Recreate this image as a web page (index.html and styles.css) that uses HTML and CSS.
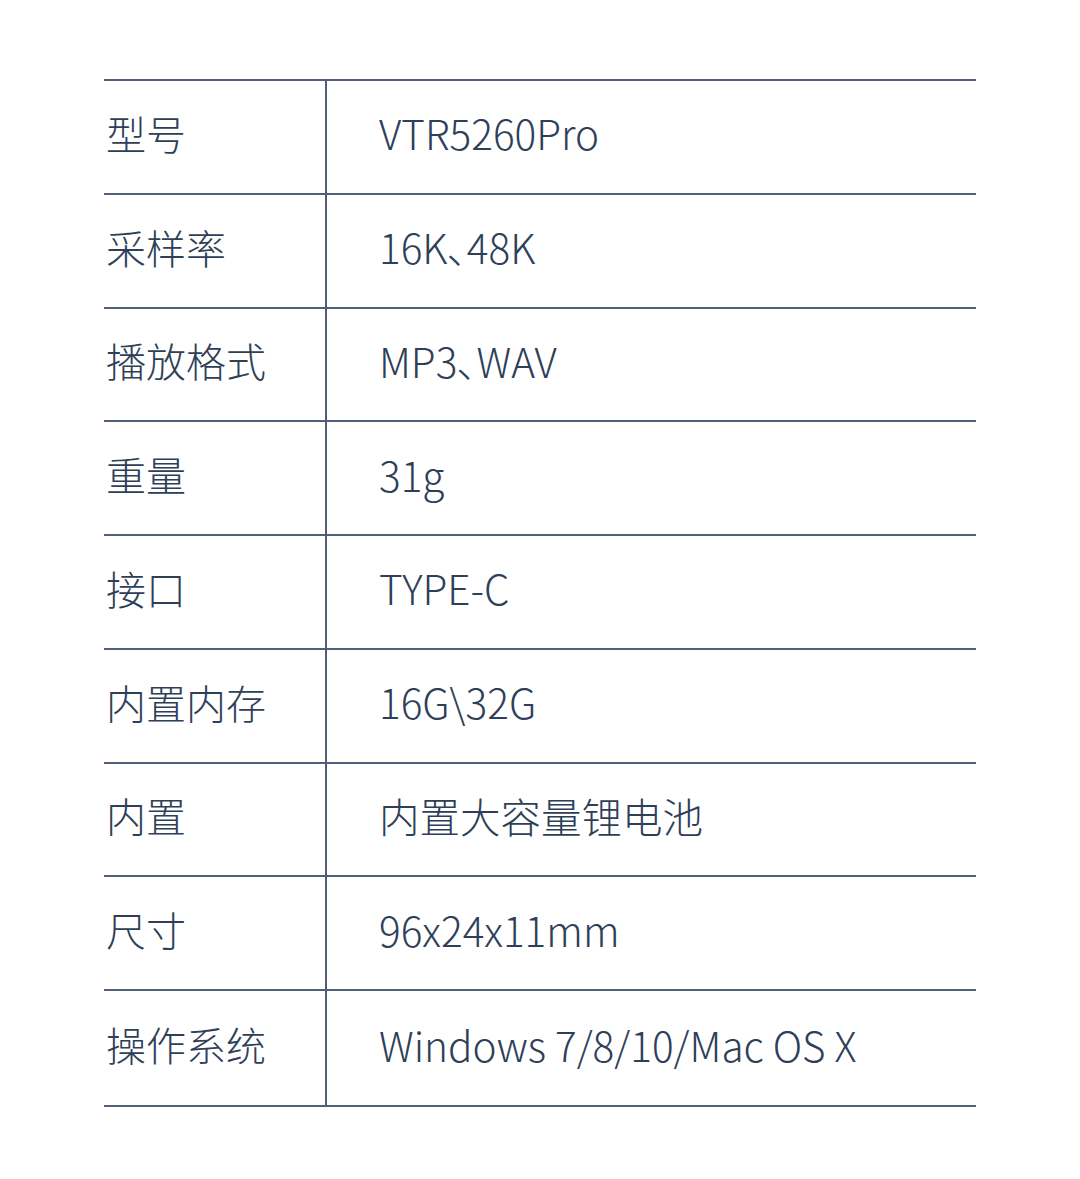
FILE: index.html
```html
<!DOCTYPE html>
<html lang="zh-CN">
<head>
<meta charset="utf-8">
<link rel="stylesheet" href="styles.css">
</head>
<body>
<div class="spec">
  <div class="row"><div class="k">型号</div><div class="v">VTR5260Pro</div></div>
  <div class="row"><div class="k">采样率</div><div class="v">16K<span class="p">、</span>48K</div></div>
  <div class="row"><div class="k">播放格式</div><div class="v">MP3<span class="p">、</span>WAV</div></div>
  <div class="row"><div class="k">重量</div><div class="v">31g</div></div>
  <div class="row"><div class="k">接口</div><div class="v">TYPE-C</div></div>
  <div class="row"><div class="k">内置内存</div><div class="v">16G\32G</div></div>
  <div class="row"><div class="k">内置</div><div class="v">内置大容量锂电池</div></div>
  <div class="row"><div class="k">尺寸</div><div class="v">96x24x11mm</div></div>
  <div class="row last"><div class="k">操作系统</div><div class="v">Windows 7/8/10/Mac OS X</div></div>
</div>
</body>
</html>
```
FILE: styles.css
```css
html, body {
  margin: 0;
  padding: 0;
  background: #ffffff;
}
body {
  width: 1080px;
  height: 1179px;
  font-family: "Noto Sans CJK SC", "Noto Sans", sans-serif;
  font-weight: 300;
  color: #2f3f58;
}
.spec {
  margin: 79px 0 0 104px;
  width: 872px;
  border-top: 2px solid #4f5f78;
}
.row {
  display: flex;
  height: 113.75px;
  box-sizing: border-box;
  border-bottom: 2px solid #4f5f78;
}
.row.last {
  height: 116px;
}
.k {
  width: 223px;
  box-sizing: border-box;
  border-right: 2px solid #4f5f78;
  display: flex;
  align-items: center;
  padding: 0 0 8px 2px;
  font-size: 40px;
}
.v {
  flex: 1;
  display: flex;
  align-items: center;
  padding: 0 0 8px 52px;
  font-size: 40.5px;
}
.p {
  font-feature-settings: "halt";
  margin-left: -1px;
}
```
